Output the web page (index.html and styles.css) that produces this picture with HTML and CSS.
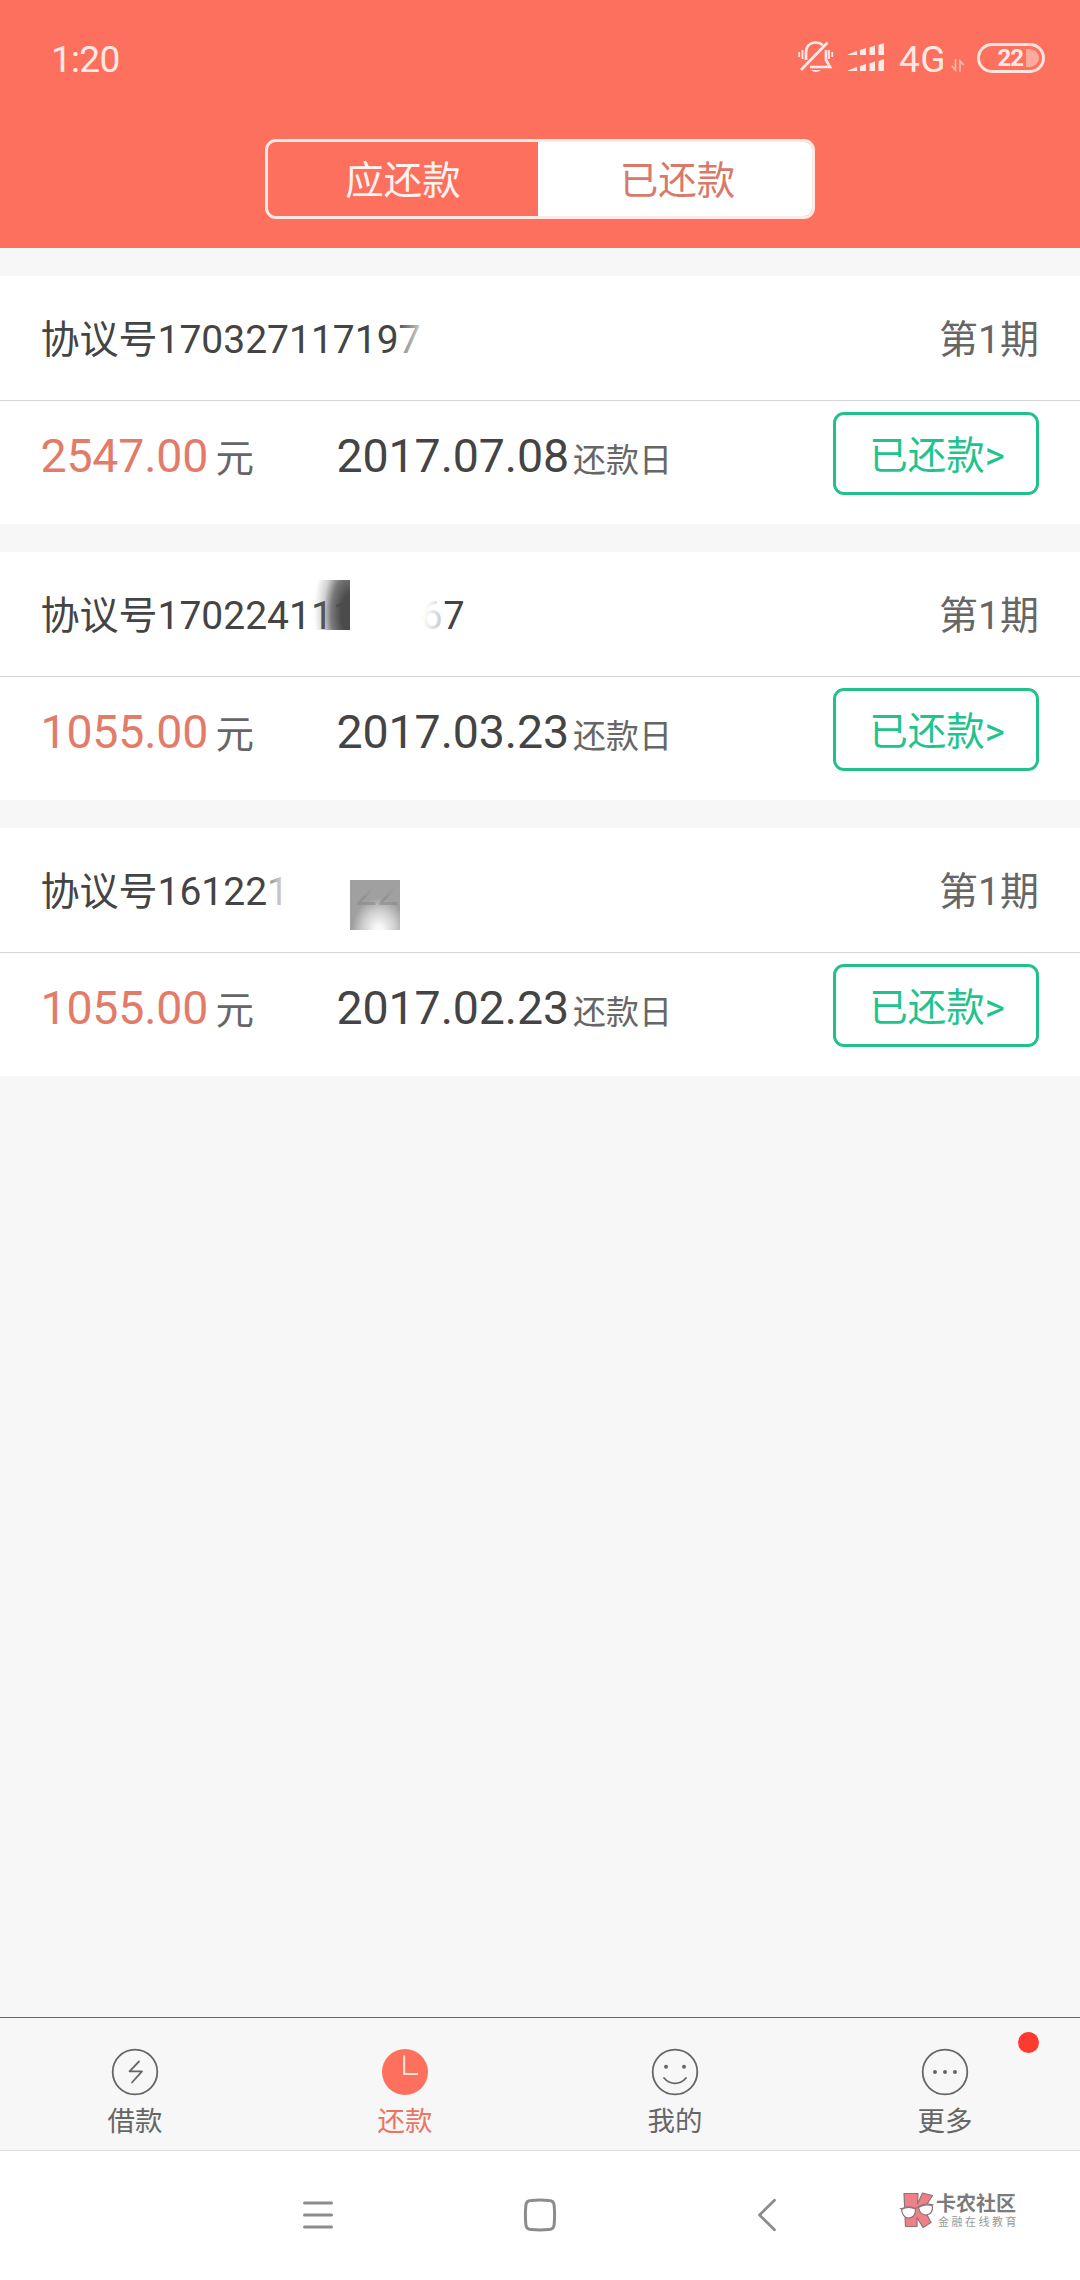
FILE: index.html
```html
<!DOCTYPE html>
<html lang="zh-CN">
<head>
<meta charset="utf-8">
<title>还款</title>
<link rel="stylesheet" href="styles.css">
</head>
<body>
<div class="screen">
  <header class="header">
    <div class="status">
      <span class="clock">1:20</span>
      <div class="status-icons">
        <svg class="bell" width="36" height="34" viewBox="0 0 36 34" fill="none" stroke="#ffe9e5" stroke-width="2.700">
          <path d="M8 20V13C8 6 12 2.500 18 2.500C21 2.500 23 3.500 24.500 5M28 10V20L32 27H12M3 30L29.500 2.500"/>
          <path d="M4.500 10V19M1.200 12V17M31 10V19M34.200 12V17" stroke-width="1.800"/>
          <path d="M13 30H23Q18 34 13 30Z" fill="#ffe9e5" stroke="none"/>
        </svg>
        <svg class="signal" width="37" height="30" viewBox="0 0 37 30" fill="#ffe9e5">
          <path d="M0 11.500L9 8V12H0ZM12 7L18 5V12H12ZM21.500 4.500L27 2.500V12H21.500ZM30.500 2L36 0V12H30.500ZM0 27.500L9 24V28H0ZM12 23L18 21V28H12ZM21.500 20.500L27 18.500V28H21.500ZM30.500 18L36 16V28H30.500Z"/>
        </svg>
        <span class="net">4G</span>
        <svg class="arrows" width="14" height="13" viewBox="0 0 14 13" fill="none" stroke="#ffb5a9" stroke-width="1.800">
          <path d="M4.500 0V11L.8 7M9 13V2L12.700 6"/>
        </svg>
        <div class="battery"><span>22</span><i></i></div>
      </div>
    </div>
    <div class="segment">
      <span class="seg">应还款</span>
      <span class="seg seg-on">已还款</span>
    </div>
  </header>

  <main class="list">
    <section class="card">
      <div class="row top">
        <div class="number">协议号170327117197<i class="fade fade-a"></i></div>
        <span class="period">第1期</span>
      </div>
      <div class="row bottom">
        <span class="amount">2547.00</span><span class="unit">元</span>
        <span class="date">2017.07.08</span><span class="day">还款日</span>
        <span class="paid">已还款&gt;</span>
      </div>
    </section>
    <section class="card">
      <div class="row top">
        <div class="number">协议号170224111<span class="gap"></span>67<i class="smudge"></i><i class="fade fade-b"></i></div>
        <span class="period">第1期</span>
      </div>
      <div class="row bottom">
        <span class="amount">1055.00</span><span class="unit">元</span>
        <span class="date">2017.03.23</span><span class="day">还款日</span>
        <span class="paid">已还款&gt;</span>
      </div>
    </section>
    <section class="card">
      <div class="row top">
        <div class="number">协议号161221<i class="fade fade-c"></i><i class="block"></i><span class="gap"></span><span class="ghost">22</span></div>
        <span class="period">第1期</span>
      </div>
      <div class="row bottom">
        <span class="amount">1055.00</span><span class="unit">元</span>
        <span class="date">2017.02.23</span><span class="day">还款日</span>
        <span class="paid">已还款&gt;</span>
      </div>
    </section>
  </main>

  <nav class="tabs">
    <div class="tab">
      <svg width="48" height="48" viewBox="0 0 48 48" fill="none" stroke="#666" stroke-width="1.800" stroke-linecap="round" stroke-linejoin="round"><circle cx="24" cy="24" r="22.300"/><path d="M28 13.500L18.500 23.300H31L21 34.500"/></svg>
      <span>借款</span>
    </div>
    <div class="tab tab-on">
      <svg width="48" height="48" viewBox="0 0 48 48" fill="none"><circle cx="24" cy="24" r="23" fill="#fc705d"/><path d="M23.200 7.500V26H37" stroke="#ffe4df" stroke-width="2"/></svg>
      <span>还款</span>
    </div>
    <div class="tab">
      <svg width="48" height="48" viewBox="0 0 48 48" fill="none" stroke="#666" stroke-width="1.800" stroke-linecap="round"><circle cx="24" cy="24" r="22.300"/><path d="M13 30Q17.500 35.300 24 35.300T35 30"/><g fill="#666" stroke="none"><circle cx="15" cy="18.700" r="2"/><circle cx="33" cy="18.700" r="2"/></g></svg>
      <span>我的</span>
    </div>
    <div class="tab">
      <svg width="48" height="48" viewBox="0 0 48 48" fill="none" stroke="#666" stroke-width="1.800"><circle cx="24" cy="24" r="22.300"/><g fill="#666" stroke="none"><circle cx="14" cy="24" r="2"/><circle cx="24" cy="24" r="2"/><circle cx="34" cy="24" r="2"/></g></svg>
      <span>更多</span>
      <i class="badge"></i>
    </div>
  </nav>

  <footer class="sysbar">
    <svg width="32" height="34" viewBox="0 0 32 34" fill="none" stroke="#8c8c8c" stroke-width="3" stroke-linecap="round"><path d="M2.500 5H29.500M2.500 17H29.500M2.500 29H29.500"/></svg>
    <svg width="34" height="34" viewBox="0 0 34 34" fill="none" stroke="#8c8c8c" stroke-width="3"><path d="M8 2.500Q17 1.500 26 2.500Q31 2.500 31.200 8Q32 17 31.200 26Q31 31.500 26 31.500Q17 32.300 8 31.500Q3 31.500 2.800 26Q2 17 2.800 8Q3 2.500 8 2.500Z"/></svg>
    <svg width="20" height="34" viewBox="0 0 20 34" fill="none" stroke="#8c8c8c" stroke-width="2.800" stroke-linecap="round" stroke-linejoin="round"><path d="M17.500 2.300L2.500 17L17.500 31.700"/></svg>
    <div class="brand">
      <svg width="36" height="38" viewBox="0 0 36 38" stroke="#8a7577" stroke-width="1.200" stroke-linejoin="round">
        <path d="M5 2.500H19L18.500 13L23.500 2L33.500 4.500L25 18L32 31.500L24 36.500L18 26.500V35.500H6.500Z" fill="#ef7f88"/>
        <path d="M.8 17.500L3 17.500Q10 14 16.500 17.500L19 16Q26 11.500 34.500 14" fill="none"/>
        <path d="M2.500 18.500Q9 14.500 16.500 18Q17 26 10 27Q3.500 27 2.500 18.500Z" fill="#fff"/>
        <path d="M19.500 16.500Q26 12 33.500 15Q34 23 27.500 24Q21 24 19.500 16.500Z" fill="#fff"/>
      </svg>
      <div class="brand-text"><b>卡农社区</b><span>金融在线教育</span></div>
    </div>
  </footer>
</div>
</body>
</html>
```

FILE: styles.css
```css
* { box-sizing: border-box; }
body { margin: 0; }
i { display: block; }
svg { display: block; flex: none; }

.screen {
  width: 1080px;
  height: 2280px;
  display: flex;
  flex-direction: column;
  background: #f7f7f7;
  font-family: Roboto, "Noto Sans CJK SC", sans-serif;
  overflow: hidden;
}

/* header */
.header {
  height: 248px;
  flex: none;
  background: #fc705d;
}
.status {
  height: 139px;
  padding: 39px 35px 0 51px;
  display: flex;
  justify-content: space-between;
  align-items: flex-start;
  color: #ffe9e5;
}
.clock { font-size: 37px; line-height: 42px; letter-spacing: -.7px; }
.status-icons { display: flex; align-items: flex-start; }
.bell { margin: 1px 14px 0 0; }
.signal { margin: 4px 14px 0 0; }
.net { width: 50px; font-size: 37px; line-height: 42px; white-space: nowrap; letter-spacing: .5px; }
.arrows { margin: 20px 12px 0 2px; }
.battery {
  width: 68px;
  height: 30px;
  margin-top: 4px;
  border: 3px solid #ffe3de;
  border-radius: 15px;
  display: flex;
  align-items: center;
  justify-content: flex-end;
  gap: 3px;
  padding-right: 3px;
  font-size: 24px;
  line-height: 24px;
  font-weight: 700;
  letter-spacing: -1px;
}
.battery i { width: 13px; height: 18px; background: #ffaa9d; border-radius: 0 9px 9px 0; }

.segment {
  width: 550px;
  height: 80px;
  margin: 0 auto;
  border: 3px solid #ffe9e5;
  border-radius: 11px;
  display: grid;
  grid-template-columns: 270px 1fr;
  overflow: hidden;
  font-size: 38.5px;
  line-height: 78px;
  text-align: center;
  color: #fff3f0;
}
.seg-on { padding-left: 5px; background: #fff; color: #d9796a; }

/* repayment cards */
.list {
  flex: 1;
  padding-top: 28px;
  display: flex;
  flex-direction: column;
  gap: 28px;
}
.card { height: 248px; background: #fff; }
.row { display: flex; padding: 0 41px 0 40.5px; }
.top {
  height: 125px;
  border-bottom: 1px solid #d3d4d4;
  justify-content: space-between;
  font-size: 39px;
  line-height: 128px;
  color: #444;
}
.number { position: relative; height: 124px; white-space: nowrap; }
.period { color: #666; }
.bottom { height: 123px; align-items: baseline; line-height: 110px; white-space: nowrap; }
.amount { width: 175px; font-size: 46.500px; letter-spacing: -.2px; color: #e27c69; }
.unit { width: 121px; font-size: 38.500px; color: #666; }
.date { width: 236.500px; font-size: 46.500px; letter-spacing: -.1px; color: #444; }
.day { font-size: 33px; color: #666; }
.paid {
  width: 206px;
  height: 83px;
  margin: 11px 0 0 auto;
  padding-left: 2px;
  align-self: flex-start;
  border: 3px solid #22c18c;
  border-radius: 11px;
  text-align: center;
  font-size: 38.500px;
  line-height: 82px;
  color: #1fc48c;
}

/* masked parts of the agreement number */
.gap { display: inline-block; width: 66px; }
.fade, .smudge, .block { position: absolute; }
.fade-a { left: 354px; top: 40px; width: 34px; height: 50px; background: linear-gradient(105deg, transparent 10%, #fff 78%); }
.smudge { left: 271.500px; top: 28px; width: 38px; height: 50px; background: radial-gradient(ellipse 36px 78px at 100% 68%, #4b4b4b 25%, #585858cc 52%, #77777755 74%, transparent 100%); }
.fade-b { left: 382px; top: 40px; width: 22px; height: 50px; background: linear-gradient(100deg, #fff 15%, #ffffffa0); }
.fade-c { left: 226px; top: 40px; width: 24px; height: 50px; background: linear-gradient(90deg, #ffffff60, #fff); }
.block { left: 309.500px; top: 52px; width: 50px; height: 50px; background: radial-gradient(ellipse 27px 32px at 58% 100%, #f7f7f7 15%, #cfcfcf 60%, #a0a0a0 100%); }
.ghost { position: relative; color: #8a8a8a; opacity: .6; -webkit-mask-image: linear-gradient(transparent 42%, #000 62%); mask-image: linear-gradient(transparent 42%, #000 62%); }

/* tab bar */
.tabs {
  height: 134px;
  flex: none;
  border-top: 1px solid #666;
  border-bottom: 1px solid #dedede;
  display: grid;
  grid-template-columns: repeat(4, 1fr);
}
.tab {
  position: relative;
  display: flex;
  flex-direction: column;
  align-items: center;
  padding-top: 30px;
  font-size: 27.500px;
  line-height: 52px;
  color: #666;
}
.tab-on { color: #ee7462; }
.badge {
  position: absolute;
  right: 41px;
  top: 14px;
  width: 21px;
  height: 21px;
  border-radius: 50%;
  background: #fd3a30;
}

/* system navigation */
.sysbar {
  height: 129px;
  flex: none;
  background: #fff;
  display: flex;
  align-items: flex-start;
  padding: 47px 0 0 302px;
}
.sysbar > svg:nth-child(2) { margin-left: 189px; }
.sysbar > svg:nth-child(3) { margin-left: 200px; }
.brand { margin: -7px 0 0 122px; display: flex; gap: 1px; }
.brand-text { display: flex; flex-direction: column; white-space: nowrap; color: #7b7b7b; }
.brand-text b { font-size: 20px; line-height: 26px; }
.brand-text span { font-size: 11px; line-height: 12px; letter-spacing: 2.500px; padding-left: 2px; color: #999; }
```
